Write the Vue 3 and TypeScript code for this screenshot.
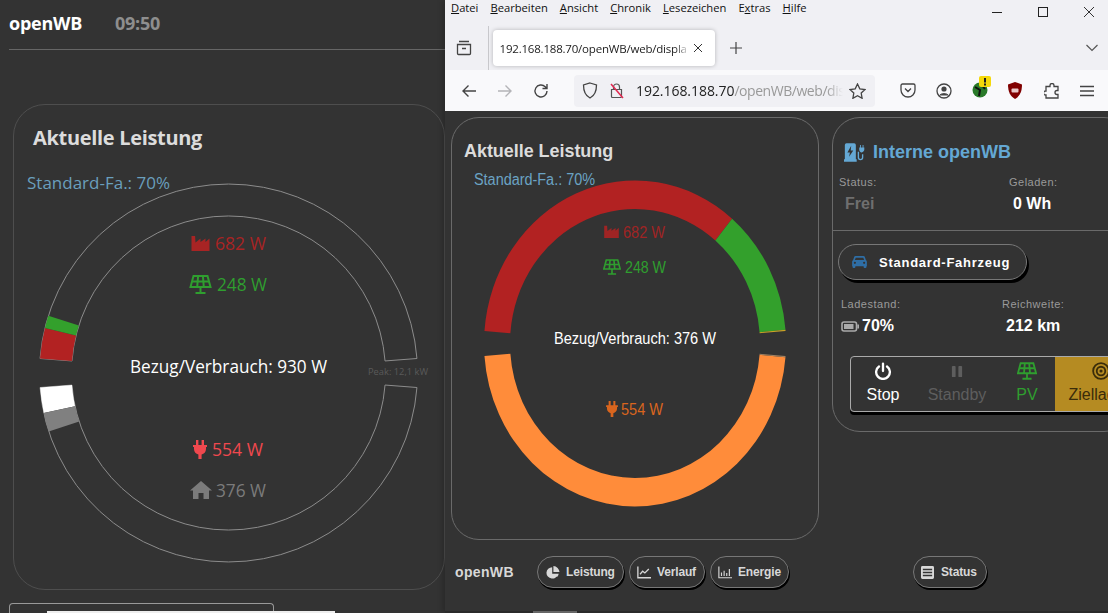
<script setup lang="ts">
interface Label { text: string; x: number; y: number; w: number; size: number; color: string; icon?: string; ix?: number; iy?: number; iw?: number; ih?: number }

function pt(cx: number, cy: number, rx: number, ry: number, deg: number): string {
  const a = (deg * Math.PI) / 180
  return `${(cx + rx * Math.cos(a)).toFixed(2)} ${(cy - ry * Math.sin(a)).toFixed(2)}`
}
function seg(cx: number, cy: number, o: [number, number], i: [number, number], a0: number, a1: number): string {
  const large = Math.abs(a1 - a0) > 180 ? 1 : 0
  const sweepOuter = a1 > a0 ? 0 : 1
  const sweepInner = a1 > a0 ? 1 : 0
  return `M${pt(cx, cy, o[0], o[1], a0)}A${o[0]} ${o[1]} 0 ${large} ${sweepOuter} ${pt(cx, cy, o[0], o[1], a1)}L${pt(cx, cy, i[0], i[1], a1)}A${i[0]} ${i[1]} 0 ${large} ${sweepInner} ${pt(cx, cy, i[0], i[1], a0)}Z`
}

const L = { cx: 228.5, cy: 373, o: [189, 189] as [number, number], i: [157, 157] as [number, number] }
const leftOutline = [seg(L.cx, L.cy, L.o, L.i, 4.4, 175.6), seg(L.cx, L.cy, L.o, L.i, -4.4, -175.6)]
const leftSegs = [
  { d: seg(L.cx, L.cy, L.o, L.i, 175.6, 166.2), c: '#b22222' },
  { d: seg(L.cx, L.cy, L.o, L.i, 166.2, 162.4), c: '#33a02c' },
  { d: seg(L.cx, L.cy, L.o, L.i, -175.6, -167.8), c: '#ffffff' },
  { d: seg(L.cx, L.cy, L.o, L.i, -167.8, -162), c: '#808080' },
]
const leftLabels: Label[] = [
  { text: '682 W', x: 215, y: 250, w: 51, size: 18, color: '#a82424', icon: 'ic-factory', ix: 191, iy: 235, iw: 19, ih: 16 },
  { text: '248 W', x: 217, y: 291, w: 50, size: 18, color: '#2f9e2f', icon: 'ic-solar', ix: 189, iy: 275, iw: 23, ih: 19 },
  { text: 'Bezug/Verbrauch: 930 W', x: 130, y: 373, w: 197, size: 18, color: '#ffffff' },
  { text: '554 W', x: 212, y: 456, w: 51, size: 18, color: '#f0484e', icon: 'ic-plug', ix: 193, iy: 440, iw: 14, ih: 19 },
  { text: '376 W', x: 216, y: 497, w: 50, size: 18, color: '#7b7b7b', icon: 'ic-house', ix: 190, iy: 481, iw: 22, ih: 18 },
  { text: 'Peak: 12,1 kW', x: 368, y: 375, w: 60, size: 9, color: '#5a5a5a' },
]

const R = { cx: 635, cy: 343.5, o: [151, 163] as [number, number], i: [125, 134.5] as [number, number] }
const rightSegs = [
  { d: seg(R.cx, R.cy, R.o, R.i, 175.6, 50), c: '#b22222' },
  { d: seg(R.cx, R.cy, R.o, R.i, 50, 4.8), c: '#33a02c' },
  { d: seg(R.cx, R.cy, R.o, R.i, 4.8, 4.4), c: '#c9a227' },
  { d: seg(R.cx, R.cy, R.o, R.i, -175.6, -4.8), c: '#ff8c3a' },
  { d: seg(R.cx, R.cy, R.o, R.i, -4.8, -4.4), c: '#a08060' },
]
const rightLabels: Label[] = [
  { text: 'Standard-Fa.: 70%', x: 474, y: 185, w: 121, size: 16, color: '#6ba3c4' },
  { text: '682 W', x: 623, y: 238, w: 42, size: 16, color: '#a02424', icon: 'ic-factory', ix: 604, iy: 225, iw: 15, ih: 13 },
  { text: '248 W', x: 625, y: 273, w: 41, size: 16, color: '#2f9e2f', icon: 'ic-solar', ix: 603, iy: 259, iw: 18, ih: 16 },
  { text: 'Bezug/Verbrauch: 376 W', x: 554, y: 344, w: 162, size: 16, color: '#ffffff' },
  { text: '554 W', x: 621, y: 415, w: 42, size: 16, color: '#d9651e', icon: 'ic-plug', ix: 606, iy: 401, iw: 12, ih: 16 },
]

const menus = [
  { u: 'D', t: 'atei' }, { u: 'B', t: 'earbeiten' }, { u: 'A', t: 'nsicht' }, { u: 'C', t: 'hronik' },
  { u: 'L', t: 'esezeichen' }, { p: 'E', u: 'x', t: 'tras' }, { u: 'H', t: 'ilfe' },
]
const navs = [
  { icon: 'ic-pie', text: 'Leistung' }, { icon: 'ic-line', text: 'Verlauf' }, { icon: 'ic-bars', text: 'Energie' },
]
const modes = [
  { icon: 'ic-power', text: 'Stop', cls: 'stop' }, { icon: 'ic-pause', text: 'Standby', cls: 'standby' },
  { icon: 'ic-solar', text: 'PV', cls: 'pv' }, { icon: 'ic-target', text: 'Zielladen', cls: 'ziel' },
]
</script>

<template>
  <svg class="sprite" aria-hidden="true">
    <symbol id="ic-factory" viewBox="0 0 18 16"><path fill="currentColor" d="M0 16V1h3.6l.4 6.5L9 3.6V7l5-3.4V7l4-3.6V16z" /></symbol>
    <symbol id="ic-solar" viewBox="0 0 22 19">
      <g fill="none" stroke="currentColor" stroke-width="2"><path d="M4 1h14l3 11H1z" /><path d="M2.600 6.500h16.800M8.600 1l-.9 11M13.400 1l.9 11M11 12v6M6 18h10" /></g>
    </symbol>
    <symbol id="ic-plug" viewBox="0 0 14 19"><path fill="currentColor" d="M3 0h2.400v5H8.600V0H11v5h3v2h-1v2c0 2.900-2 5-4.400 5.500V19H5.400v-4.500C3 14 1 11.900 1 9V7H0V5h3z" /></symbol>
    <symbol id="ic-house" viewBox="0 0 22 18"><path fill="currentColor" d="M11 0l11 9.500h-3V18h-5.500v-6h-5v6H3V9.500H0z" /></symbol>
    <symbol id="ic-pie" viewBox="0 0 16 16"><path fill="currentColor" d="M7 1.500A7 7 0 1 0 13.900 9.500H7zM8.500 0v7.500H16A8 8 0 0 0 8.500 0zM9 9.500l4 4a7 7 0 0 0 2-4z" /></symbol>
    <symbol id="ic-line" viewBox="0 0 16 14"><path fill="none" stroke="currentColor" stroke-width="1.500" d="M1 0v13h15M3.500 9l3-3.500 2.500 2L13.500 3" /></symbol>
    <symbol id="ic-bars" viewBox="0 0 16 14"><path fill="none" stroke="currentColor" stroke-width="1.300" d="M1 0v13h15M4 11V7M7 11V5M10 11V7.500M13 11V3" /></symbol>
    <symbol id="ic-list" viewBox="0 0 14 14"><path fill="currentColor" fill-rule="evenodd" d="M1.500 0h11A1.500 1.500 0 0 1 14 1.500v11a1.500 1.500 0 0 1-1.500 1.500h-11A1.500 1.500 0 0 1 0 12.500v-11A1.500 1.500 0 0 1 1.500 0zM2 3v1.500h10V3zM2 6.300v1.500h10V6.300zM2 9.500V11h10V9.500z" /></symbol>
    <symbol id="ic-car" viewBox="0 0 16 13"><path fill="currentColor" fill-rule="evenodd" d="M3.700 0h8.600c.7 0 1.300.4 1.500 1l1.100 3.400c.6.400 1.100 1 1.100 1.800V11h-.5v1a1 1 0 0 1-1 1h-1a1 1 0 0 1-1-1v-1H3.500v1a1 1 0 0 1-1 1h-1a1 1 0 0 1-1-1v-1H0V6.200c0-.8.500-1.400 1.100-1.800L2.200 1C2.400.4 3 0 3.700 0zM3.900 1.800L3 4.300h10l-.9-2.500zM3 6.200a1.200 1.200 0 1 0 0 2.400 1.200 1.200 0 0 0 0-2.400zm10 0a1.200 1.200 0 1 0 0 2.400 1.200 1.200 0 0 0 0-2.400z" /></symbol>
    <symbol id="ic-battery" viewBox="0 0 18 11"><rect x="1" y="1" width="14.500" height="9" rx="2" fill="none" stroke="currentColor" stroke-width="1.600" /><rect x="3" y="3" width="9.500" height="5" fill="currentColor" /><rect x="16.300" y="3.500" width="1.700" height="4" fill="currentColor" /></symbol>
    <symbol id="ic-power" viewBox="0 0 16 17"><path fill="none" stroke="currentColor" stroke-width="2.200" stroke-linecap="round" d="M8 1.500v7M4.200 4.200a6.500 6.500 0 1 0 7.600 0" /></symbol>
    <symbol id="ic-pause" viewBox="0 0 12 14"><rect x="0.500" y="1" width="4" height="12" rx="1" fill="currentColor" /><rect x="7.500" y="1" width="4" height="12" rx="1" fill="currentColor" /></symbol>
    <symbol id="ic-target" viewBox="0 0 16 16"><g fill="none" stroke="currentColor" stroke-width="1.600"><circle cx="8" cy="8" r="7" /><circle cx="8" cy="8" r="3.800" /></g><circle cx="8" cy="8" r="1.400" fill="currentColor" /></symbol>
    <symbol id="ic-station" viewBox="0 0 26 22">
      <path fill="currentColor" fill-rule="evenodd" d="M3 0h9a2 2 0 0 1 2 2v17h1v3H0v-3h1V2a2 2 0 0 1 2-2zM8.500 3L4 11h3l-1 5 5-7.500H8z" />
      <path fill="none" stroke="currentColor" stroke-width="1.600" d="M22 13v4a2.500 2.500 0 0 1-5 0v-7" />
      <path fill="currentColor" d="M19 2h1v3h2V2h1v3h1v2.500c0 1.700-1.200 3-3 3.500h-.500C18.700 10.500 18 9 18 7.500V5h1z" />
    </symbol>
  </svg>

  <div class="screen">
    <section class="display">
      <header class="dhead">
        <strong class="dbrand">openWB</strong>
        <span class="dtime">09:50</span>
      </header>
      <div class="dpanel">
        <h2 class="dtitle">Aktuelle Leistung</h2>
        <div class="dlegend">Standard-Fa.: 70%</div>
        <svg class="gauge" viewBox="14 105 430 484" width="430" height="484">
          <path v-for="d in leftOutline" :key="d" :d="d" fill="none" stroke="#8c8c8c" stroke-width="1" />
          <path v-for="s in leftSegs" :key="s.d" :d="s.d" :fill="s.c" />
          <g v-for="l in leftLabels" :key="l.text">
            <use v-if="l.icon" :href="'#' + l.icon" :x="l.ix" :y="l.iy" :width="l.iw" :height="l.ih" :color="l.color" />
            <text class="ltext" :x="l.x" :y="l.y" :font-size="l.size" :fill="l.color" :textLength="l.w" lengthAdjust="spacingAndGlyphs">{{ l.text }}</text>
          </g>
        </svg>
      </div>
      <div class="dnext"><i></i></div>
    </section>

    <section class="browser">
      <div class="chrome">
        <div class="menubar">
          <nav class="menus">
            <span v-for="m in menus" :key="m.t">{{ m.p }}<u>{{ m.u }}</u>{{ m.t }}</span>
          </nav>
          <div class="wctl">
            <svg width="12" height="12" viewBox="0 0 12 12"><path d="M1 6.500h10" stroke="#222" /></svg>
            <svg width="12" height="12" viewBox="0 0 12 12"><rect x="1.500" y="1.500" width="9" height="9" fill="none" stroke="#222" /></svg>
            <svg width="12" height="12" viewBox="0 0 12 12"><path d="M1 1l10 10M11 1L1 11" stroke="#333" /></svg>
          </div>
        </div>
        <div class="tabbar">
          <svg class="tview" width="16" height="16" viewBox="0 0 16 16"><path fill="none" stroke="#444" stroke-width="1.300" d="M3 1.500h10M1.500 4.500h13v9a1 1 0 0 1-1 1h-11a1 1 0 0 1-1-1zM6 8.500h4" /></svg>
          <span class="tsep"></span>
          <div class="tab">
            <span class="ttext">192.168.188.70/openWB/web/displa</span>
            <svg width="10" height="10" viewBox="0 0 10 10"><path d="M1 1l8 8M9 1L1 9" stroke="#333" stroke-width="1" /></svg>
          </div>
          <svg class="tplus" width="14" height="14" viewBox="0 0 14 14"><path d="M7 1v12M1 7h12" stroke="#444" stroke-width="1.200" /></svg>
          <svg class="tdown" width="14" height="10" viewBox="0 0 14 10"><path d="M1.500 2l5.500 5.500L12.500 2" fill="none" stroke="#555" stroke-width="1.200" /></svg>
        </div>
        <div class="toolbar">
          <svg class="tb back" width="16" height="14" viewBox="0 0 16 14"><path d="M15 7H2M7.500 1.500L2 7l5.500 5.500" fill="none" stroke="#444" stroke-width="1.400" /></svg>
          <svg class="tb fwd" width="16" height="14" viewBox="0 0 16 14"><path d="M1 7h13M8.500 1.500L14 7l-5.500 5.500" fill="none" stroke="#b4b4b8" stroke-width="1.400" /></svg>
          <svg class="tb reload" width="16" height="16" viewBox="0 0 16 16"><path d="M14 8a6 6 0 1 1-1.800-4.300L14 5.500M14 1v4.500H9.500" fill="none" stroke="#444" stroke-width="1.400" /></svg>
          <div class="urlbar">
            <svg width="16" height="17" viewBox="0 0 16 17"><path d="M8 1l6.500 2c0 6-1.500 10.500-6.500 13C3 13.500 1.500 9 1.500 3z" fill="none" stroke="#444" stroke-width="1.300" /></svg>
            <svg class="lock" width="16" height="17" viewBox="0 0 16 17"><path d="M4.500 7V5a3 3 0 0 1 6 0v2M2.500 7.500h10v7a1 1 0 0 1-1 1h-8a1 1 0 0 1-1-1z" fill="none" stroke="#555" stroke-width="1.200" /><path d="M2 2l12 14" stroke="#e22850" stroke-width="1.500" /></svg>
            <span class="url"><span>192.168.188.70</span>/openWB/web/dis</span>
            <svg class="star" width="17" height="16" viewBox="0 0 17 16"><path d="M8.500 1l2.300 4.800 5.200.700-3.800 3.600.9 5.200-4.600-2.500-4.600 2.500.9-5.200L1 6.500l5.200-.7z" fill="none" stroke="#444" stroke-width="1.300" /></svg>
          </div>
          <div class="exts">
            <svg width="16" height="15" viewBox="0 0 16 15"><path d="M2.500 1h11A1.500 1.500 0 0 1 15 2.500V7a7 7 0 0 1-14 0V2.500A1.500 1.500 0 0 1 2.500 1zM5 5.500L8 8.500l3-3" fill="none" stroke="#444" stroke-width="1.300" /></svg>
            <svg width="16" height="16" viewBox="0 0 16 16"><circle cx="8" cy="8" r="7" fill="none" stroke="#444" stroke-width="1.300" /><circle cx="8" cy="6" r="2.600" fill="#444" /><path d="M3.500 12.500c1-2.500 8-2.500 9 0" fill="#444" stroke="#444" /></svg>
            <svg class="globe" width="20" height="22" viewBox="0 0 20 22"><circle cx="8" cy="14" r="7.500" fill="#2a7a2a" /><path d="M3 11l5 3-1 6M9 8l4 5" stroke="#111" stroke-width="2" fill="none" /><rect x="7" y="0" width="12" height="11" rx="2" fill="#f5d90a" /><rect x="12" y="2" width="2" height="4.500" fill="#222" /><rect x="12" y="7.500" width="2" height="2" fill="#222" /></svg>
            <svg width="16" height="17" viewBox="0 0 16 17"><path d="M8 0l7 2.500c0 7-2 11.500-7 14.500C3 14 1 9.500 1 2.500z" fill="#800000" /><rect x="4.500" y="6.500" width="7" height="4" rx="1" fill="#e8c8c8" /></svg>
            <svg width="16" height="16" viewBox="0 0 16 16"><path d="M6 3.500V2.500a2 2 0 0 1 4 0v1h4v4h-1a2 2 0 0 0 0 4h1V15H2v-3h-.5a2 2 0 0 1 0-4H2V3.500z" fill="none" stroke="#444" stroke-width="1.300" /></svg>
            <svg width="14" height="12" viewBox="0 0 14 12"><path d="M0 1.500h14M0 6h14M0 10.500h14" stroke="#444" stroke-width="1.300" /></svg>
          </div>
        </div>
      </div>

      <div class="page">
        <div class="cols">
          <article class="card power">
            <h2 class="ptitle">Aktuelle Leistung</h2>
            <svg class="gauge" viewBox="452 118 366 421" width="366" height="421">
              <path v-for="s in rightSegs" :key="s.d" :d="s.d" :fill="s.c" />
              <g v-for="l in rightLabels" :key="l.text">
                <use v-if="l.icon" :href="'#' + l.icon" :x="l.ix" :y="l.iy" :width="l.iw" :height="l.ih" :color="l.color" />
                <text class="rtext" :x="l.x" :y="l.y" :font-size="l.size" :fill="l.color" :textLength="l.w" lengthAdjust="spacingAndGlyphs">{{ l.text }}</text>
              </g>
            </svg>
          </article>
          <article class="card wb">
            <div class="wbtop">
              <h3 class="wbtitle"><svg width="22" height="21"><use href="#ic-station" /></svg>Interne openWB</h3>
              <div class="kv">
                <div class="lbl">Status:</div><div class="lbl l2">Geladen:</div>
                <div class="val frei">Frei</div><div class="val v2">0 Wh</div>
              </div>
            </div>
            <div class="wbbottom">
              <button class="vehicle"><svg width="15" height="12"><use href="#ic-car" /></svg>Standard-Fahrzeug</button>
              <div class="kv kv2">
                <div class="lbl">Ladestand:</div><div class="lbl l2">Reichweite:</div>
                <div class="val"><svg class="bat" width="18" height="11"><use href="#ic-battery" /></svg>70%</div><div class="val v2">212 km</div>
              </div>
              <div class="modes">
                <div v-for="m in modes" :key="m.text" class="mode" :class="m.cls">
                  <svg width="20" height="18"><use :href="'#' + m.icon" /></svg>
                  <span>{{ m.text }}</span>
                </div>
              </div>
            </div>
          </article>
        </div>
        <footer class="foot">
          <strong class="brand">openWB</strong>
          <button v-for="n in navs" :key="n.text" class="pill" :class="n.icon">
            <svg width="14" height="13"><use :href="'#' + n.icon" /></svg>{{ n.text }}
          </button>
          <button class="pill status"><svg width="13" height="13"><use href="#ic-list" /></svg>Status</button>
        </footer>
        <div class="scroll"><i></i></div>
      </div>
    </section>
  </div>
</template>

<style>
html, body { margin: 0; background: #333; overflow: hidden; }
</style>

<style scoped>
.sprite { position: absolute; width: 0; height: 0; }
.screen { display: flex; width: 1108px; height: 613px; overflow: hidden; background: #333; }
.display { width: 445px; flex: none; padding-left: 9px; box-sizing: border-box; font-family: "Open Sans", sans-serif; overflow: hidden; }
.dhead { height: 46px; padding-bottom: 3px; display: flex; align-items: center; gap: 32px; border-bottom: 1px solid #666; }
.dbrand { font-size: 18px; color: #fff; font-weight: 700; width: 74px; letter-spacing: -.25px; line-height: 40px; }
.dtime { font-size: 18px; color: #8e8e8e; font-weight: 700; line-height: 40px; letter-spacing: -.25px; }
.dpanel { position: relative; width: 430px; height: 484px; margin: 54px 0 0 4px; border: 1px solid #4e4e4e; border-radius: 32px; box-sizing: content-box; }
.dtitle { margin: 19px 0 0 19px; font-size: 20px; line-height: 28px; color: #dcdcdc; font-weight: 700; letter-spacing: -.32px; }
.dlegend { margin: 21px 0 0 13px; font-size: 17px; line-height: 20px; color: #6a9fbd; letter-spacing: 0; }
.gauge { position: absolute; left: 0; top: 0; }
.ltext { font-family: "Open Sans", sans-serif; }
.rtext { font-family: "Liberation Sans", sans-serif; }
.dnext { width: 265px; height: 20px; margin: 13px 0 0 0; border: 1px solid #999; border-bottom: 0; border-radius: 4px 4px 0 0; box-sizing: border-box; position: relative; }
.dnext i { position: absolute; left: 37px; top: 7px; width: 288px; height: 3px; background: #eee; }

.browser { width: 663px; flex: none; display: flex; flex-direction: column; background: #333; box-shadow: -3px 0 5px rgba(0,0,0,.18); position: relative; font-family: "Liberation Sans", sans-serif; overflow: hidden; }
.chrome { height: 111px; background: #f0f0f4; flex: none; font-family: "Open Sans", sans-serif; }
.menubar { height: 24px; display: flex; justify-content: space-between; }
.menus { display: flex; padding-left: 6px; font-size: 11.200px; color: #111; line-height: 16px; }
.menus span { margin-right: 12px; }
.wctl { display: flex; gap: 34px; padding: 6px 13px 0 0; }
.tabbar { height: 46px; display: flex; align-items: flex-start; position: relative; }
.tview { margin: 16px 0 0 11px; }
.tsep { width: 1px; height: 44px; background: #c8c8cc; margin: 2px 4px 0 15.500px; }
.tab { width: 222px; height: 36px; margin-top: 6px; background: #fff; border-radius: 4px; box-shadow: 0 0 4px rgba(0,0,0,.25); display: flex; align-items: center; padding-left: 7px; box-sizing: border-box; font-size: 11.500px; color: #222; gap: 3px; }
.ttext { width: 190px; overflow: hidden; white-space: nowrap; letter-spacing: -.2px; -webkit-mask-image: linear-gradient(90deg,#000 92%,transparent); mask-image: linear-gradient(90deg,#000 92%,transparent); }
.tplus { margin: 17px 0 0 14px; }
.tdown { margin: 19px 0 0 auto; margin-right: 9px; }
.toolbar { height: 41px; background: #f9f9fb; display: flex; align-items: center; position: relative; }
.tb { flex: none; }
.back { margin-left: 16px; }
.fwd { margin-left: 20px; }
.reload { margin-left: 20px; }
.urlbar { width: 301px; height: 32px; margin-left: 25px; background: #f0f0f4; border-radius: 4px; display: flex; align-items: center; padding-left: 8px; box-sizing: border-box; }
.lock { margin-left: 11px; }
.url { margin-left: 11px; width: 207px; flex: none; font-size: 14px; color: #999; white-space: nowrap; overflow: hidden; letter-spacing: -.45px; -webkit-mask-image: linear-gradient(90deg,#000 92%,transparent); mask-image: linear-gradient(90deg,#000 92%,transparent); }
.url span { color: #222; letter-spacing: -.05px; }
.star { margin-left: 6px; flex: none; }
.exts { display: flex; align-items: center; margin-left: 25px; }
.exts svg:nth-child(1) { margin-right: 20px; }
.exts svg:nth-child(2) { margin-right: 20px; }
.exts .globe { margin: -8px 15px 0 0; }
.exts svg:nth-child(4) { margin-right: 21px; }
.exts svg:nth-child(5) { margin-right: 20px; }

.page { flex: 1; position: relative; background: #333; }
.cols { display: flex; padding: 6px 0 0 6px; align-items: flex-start; gap: 13px; }
.card { border: 1px solid #6a6a6a; border-radius: 28px; box-sizing: border-box; flex: none; position: relative; }
.power { width: 368px; height: 423px; }
.ptitle { margin: 23px 0 0 12px; font-size: 18px; line-height: 20px; font-weight: 700; color: #dcdcdc; letter-spacing: -.05px; }
.wb { width: 300px; height: 315px; }
.wbtop { height: 113px; border-bottom: 1px solid #6a6a6a; box-sizing: border-box; padding: 22px 0 0 6px; }
.wbtitle { margin: 0 0 0 5px; display: flex; align-items: center; gap: 7px; font-size: 18px; line-height: 24px; color: #64a8d4; font-weight: 700; }
.kv { display: grid; grid-template-columns: 170px 100px; margin-top: 11px; }
.lbl { font-size: 11px; line-height: 14px; color: #9a9a9a; letter-spacing: .5px; }
.val { font-size: 16px; line-height: 20px; margin-top: 5px; font-weight: 700; color: #fff; display: flex; align-items: center; }
.frei { color: #6f6f6f; padding-left: 6px; }
.v2 { padding-left: 4px; }
.wbbottom { padding: 13px 0 0 5px; }
.vehicle { display: flex; align-items: center; width: 189px; height: 36px; padding: 0 0 0 13px; box-sizing: border-box; background: #333; border: 1px solid #777; border-radius: 18px; box-shadow: 2px 3px 0 #000; color: #fff; font: 700 13px "Liberation Sans", sans-serif; letter-spacing: .75px; gap: 12px; }
.vehicle svg { color: #2f6ea5; }
.kv2 { margin-top: 17px; grid-template-columns: 161px 100px; padding-left: 3px; }
.bat { color: #aaa; margin-right: 3px; }
.modes { display: flex; width: 300px; height: 56px; margin: 20px 0 0 12px; border: 1px solid #aaa; border-radius: 4px; box-shadow: 0 3px 0 #000; box-sizing: border-box; overflow: hidden; }
.mode { display: flex; flex-direction: column; align-items: center; padding-top: 5px; box-sizing: border-box; font-size: 16px; line-height: 18px; gap: 6px; }
.stop { width: 64px; color: #fff; }
.standby { width: 84px; color: #5e5e5e; }
.standby svg { height: 13px; margin: 3px 0 2px; }
.pv { width: 56px; color: #2f9e2f; }
.ziel { width: 92px; color: #3a2c0a; background: #b58b22; }

.foot { display: flex; align-items: center; height: 32px; margin-top: 16px; padding-left: 10px; color: #d8d8d8; }
.brand { font-size: 14px; letter-spacing: .35px; width: 82px; }
.pill { display: inline-flex; align-items: center; gap: 6px; height: 32px; padding: 0 0 0 7px; margin-right: 5px; box-sizing: border-box; background: #333; border: 1px solid #777; border-radius: 17px; box-shadow: 1px 2px 0 #000; color: #d8d8d8; font: 700 12px "Liberation Sans", sans-serif; letter-spacing: -.15px; }
.ic-pie { width: 87px; padding-left: 8px; }
.ic-line { width: 76px; }
.ic-bars { width: 79px; }
.status { width: 74px; margin-left: 119px; padding-left: 7px; gap: 7px; }
.scroll { position: absolute; left: 0; right: 0; bottom: 0; height: 2px; background: #2a2a2a; }
.scroll i { display: block; margin-left: 88px; width: 44px; height: 2px; background: #666; }
</style>
